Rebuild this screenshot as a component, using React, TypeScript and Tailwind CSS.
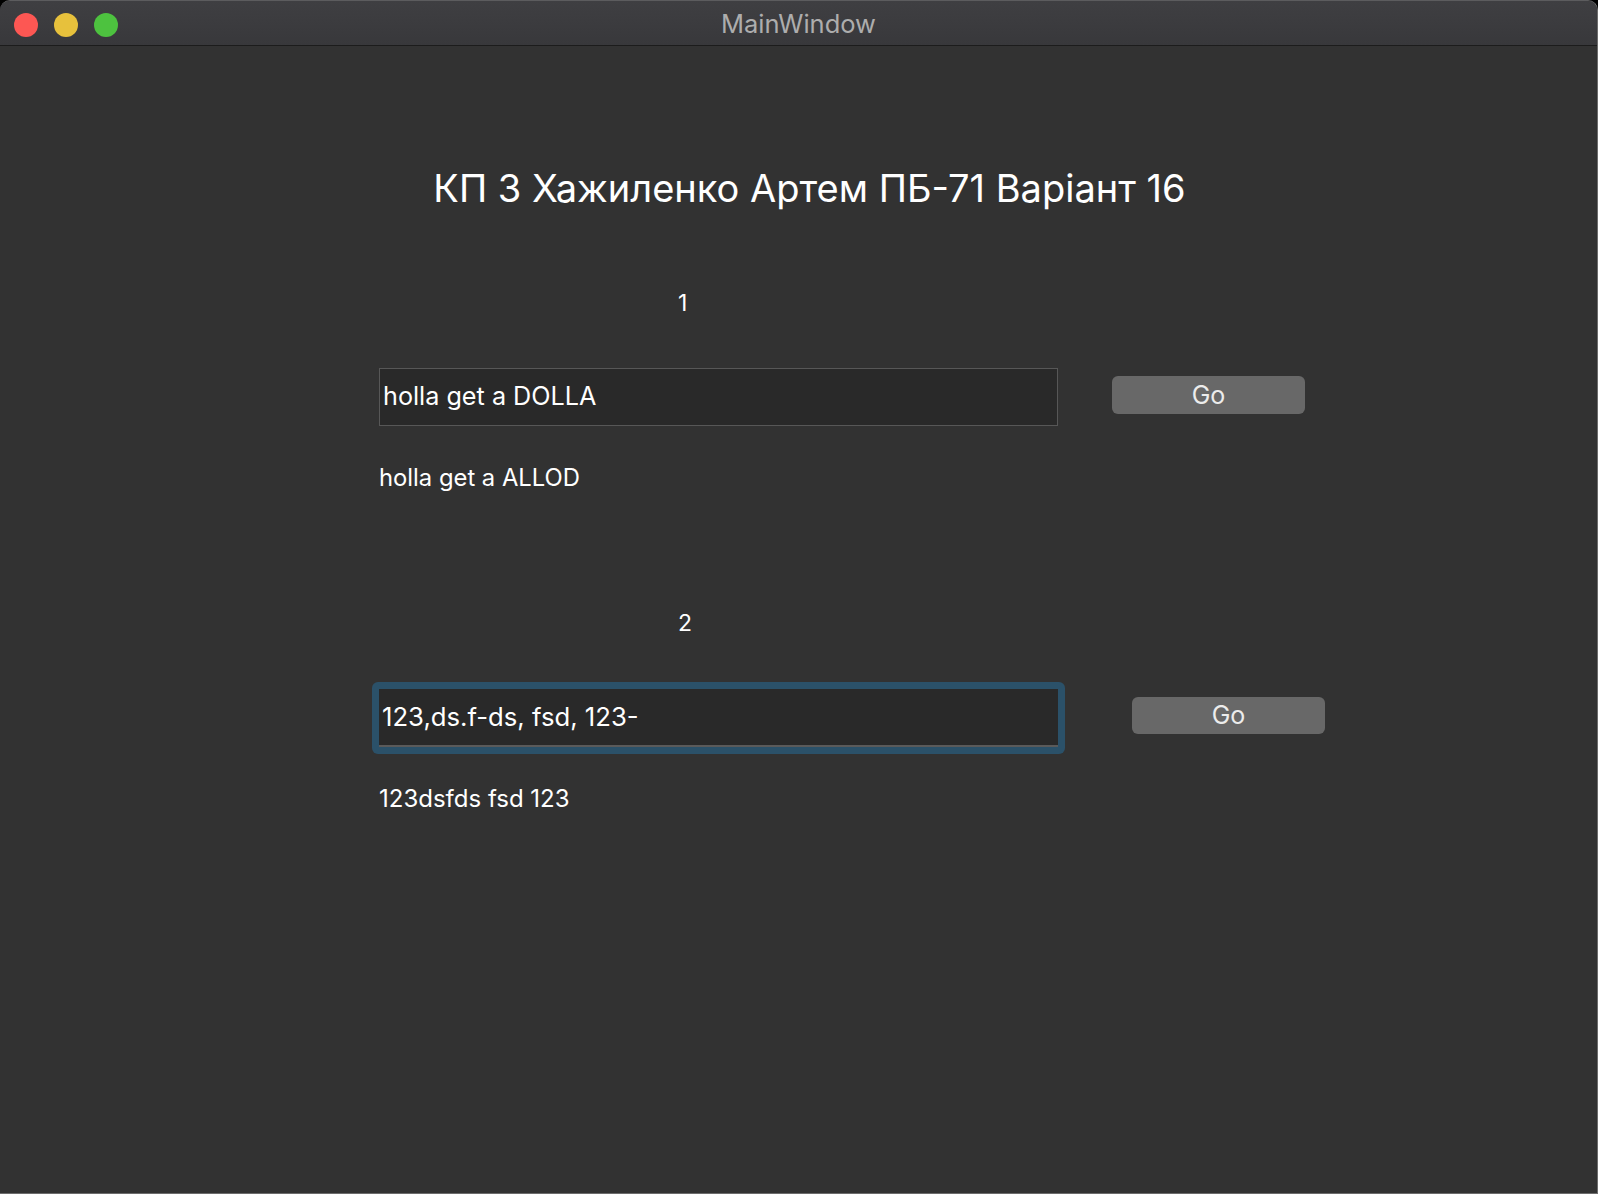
import React from "react";

const font = { fontFamily: "Inter, 'Noto Sans', sans-serif" };

export default function App() {
  return (
    <div className="w-[1598px] h-[1194px] bg-black overflow-hidden" style={font}>
      <div className="w-full h-full rounded-t-[10px] overflow-hidden border-r border-b border-t border-[#6c6c6c] border-t-[#5c5c5e] bg-[#323232] flex flex-col">
        {/* title bar */}
        <div className="relative h-[45px] shrink-0 bg-gradient-to-b from-[#3f3f42] to-[#38383b] border-b border-[#1c1c1c] flex items-center">
          <div className="flex items-center gap-[16px] pl-[14px] pt-[3px]">
            <div className="w-[24px] h-[24px] rounded-full bg-[#fd5753]" />
            <div className="w-[24px] h-[24px] rounded-full bg-[#e7c13c]" />
            <div className="w-[24px] h-[24px] rounded-full bg-[#4dc23f]" />
          </div>
          <div className="absolute inset-0 pt-[3px] flex items-center justify-center text-[25.5px] text-[#adadad]">
            MainWindow
          </div>
        </div>

        {/* content */}
        <div className="flex flex-col text-white">
          <div className="mt-[120px] h-[44px] leading-[44px] text-center pl-[22px] text-[38px]">
            КП 3 Хажиленко Артем ПБ-71 Варіант 16
          </div>

          <div className="ml-[379px] flex flex-col">
            <div className="mt-[78px] h-[30px] leading-[30px] pl-[299px] text-[23px]">1</div>
            <div className="mt-[50px] flex items-start">
              <div className="w-[679px] h-[58px] bg-[#292929] border border-[#575757] flex items-center pl-[3px] text-[25.2px]">
                holla get a DOLLA
              </div>
              <button className="ml-[54px] mt-[8px] w-[193px] h-[38px] rounded-[6px] bg-[#686868] text-[#ececec] text-[25px] leading-none">
                Go
              </button>
            </div>
            <div className="mt-[37px] h-[30px] leading-[30px] text-[23.8px]">holla get a ALLOD</div>

            <div className="mt-[115px] h-[30px] leading-[30px] pl-[299px] text-[23px]">2</div>
            <div className="mt-[44px] flex items-start">
              <div className="-ml-[7px] p-[7px] rounded-[6px] bg-[#2b5169]">
                <div className="w-[679px] h-[58px] bg-[#292929] border-b-2 border-[#5a5a5a] flex items-center pl-[3px] text-[25.7px]">
                  123,ds.f-ds, fsd, 123-
                </div>
              </div>
              <button className="ml-[67px] mt-[15px] w-[193px] h-[37px] rounded-[6px] bg-[#686868] text-[#ececec] text-[25px] leading-none">
                Go
              </button>
            </div>
            <div className="mt-[30px] h-[30px] leading-[30px] text-[24px]">123dsfds fsd 123</div>
          </div>
        </div>
      </div>
    </div>
  );
}
